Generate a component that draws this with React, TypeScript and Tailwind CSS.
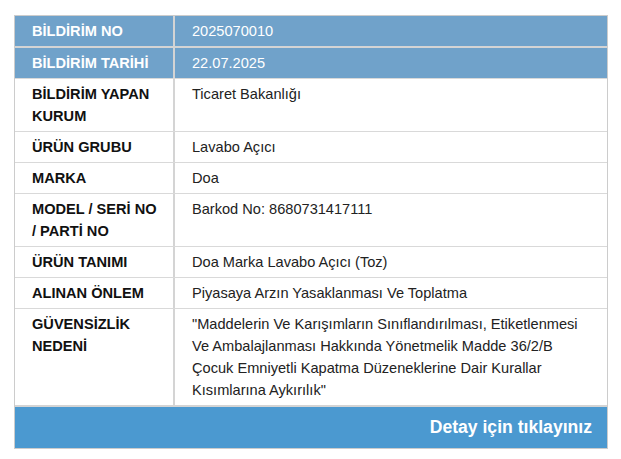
import React from "react";

const rows: { label: string; value: string; head?: boolean }[] = [
  { label: "BİLDİRİM NO", value: "2025070010", head: true },
  { label: "BİLDİRİM TARİHİ", value: "22.07.2025", head: true },
  { label: "BİLDİRİM YAPAN KURUM", value: "Ticaret Bakanlığı" },
  { label: "ÜRÜN GRUBU", value: "Lavabo Açıcı" },
  { label: "MARKA", value: "Doa" },
  { label: "MODEL / SERİ NO / PARTİ NO", value: "Barkod No: 8680731417111" },
  { label: "ÜRÜN TANIMI", value: "Doa Marka Lavabo Açıcı (Toz)" },
  { label: "ALINAN ÖNLEM", value: "Piyasaya Arzın Yasaklanması Ve Toplatma" },
  {
    label: "GÜVENSİZLİK NEDENİ",
    value:
      "\"Maddelerin Ve Karışımların Sınıflandırılması, Etiketlenmesi Ve Ambalajlanması Hakkında Yönetmelik Madde 36/2/B Çocuk Emniyetli Kapatma Düzeneklerine Dair Kurallar Kısımlarına Aykırılık\"",
  },
];

const App = () => {
  return (
    <div className="bg-white min-h-[459px] pt-[15px] pl-[14px] font-['Liberation_Sans',Arial,sans-serif]">
      <div className="w-[594px] border border-[#cccccc]">
        {rows.map((r, i) => (
          <div
            key={i}
            className={`${r.head ? "bg-[#70a2ca] text-white" : "bg-white text-[#111]"} ${
              i > 0 ? (r.head ? "border-t-2 border-[#d4d4d4]" : "border-t border-[#d9d9d9]") : ""
            } flex text-[14.6px] leading-[22px]`}
          >
            <div className="w-[160px] shrink-0 pl-[17px] pr-[12px] py-1 font-bold border-r-2 border-[#d4d4d4]">
              {r.label}
            </div>
            <div className={`flex-1 pl-[17px] pr-4 py-1 ${r.head ? "" : "text-[#222]"}`}>
              {r.value}
            </div>
          </div>
        ))}
        <div className="bg-[#4b99d0] border-t-2 border-[#d4d4d4] h-[43px] flex items-center justify-end pr-[15px]">
          <span className="text-white font-bold text-[17.6px]">Detay için tıklayınız</span>
        </div>
      </div>
    </div>
  );
};

export default App;
